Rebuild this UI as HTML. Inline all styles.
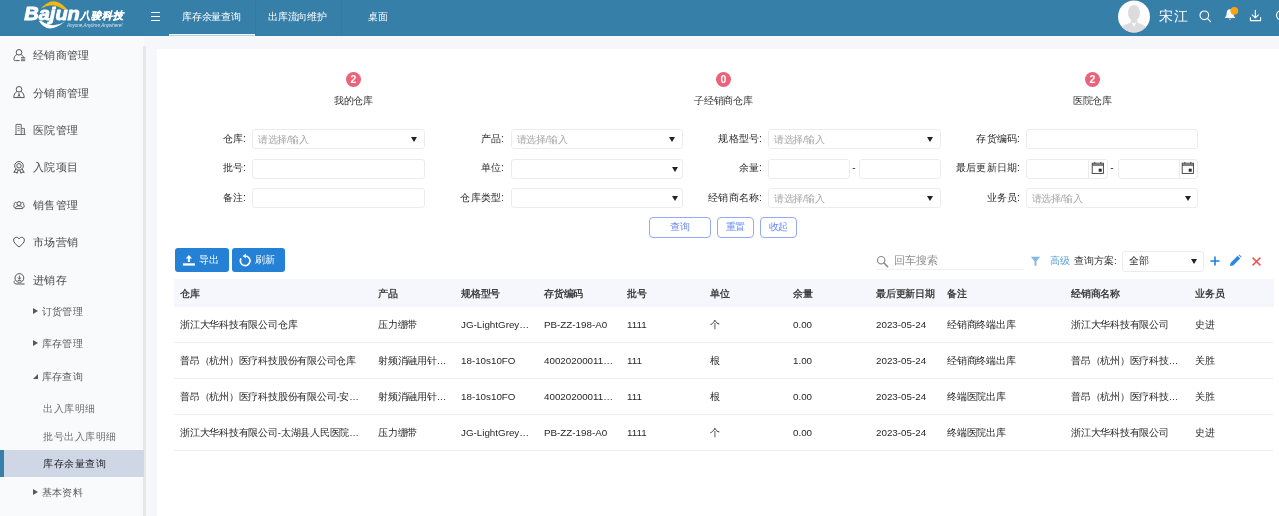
<!DOCTYPE html>
<html lang="zh">
<head>
<meta charset="utf-8">
<title>库存余量查询</title>
<style>
*{box-sizing:border-box;margin:0;padding:0}
html,body{width:1279px;height:516px;overflow:hidden;background:#f5f7fb;font-family:"Liberation Sans",sans-serif;color:#333}
#app{position:absolute;left:0;top:0;width:1279px;height:516px;overflow:hidden;will-change:transform}
.abs{position:absolute}
#hdr{position:absolute;left:0;top:0;width:1279px;height:36px;background:#367fa9}
#side{position:absolute;left:0;top:36px;width:144px;height:480px;background:#f9fafc}
#sbar{position:absolute;left:143px;top:46px;width:3px;height:470px;background:#e7e7e9;border-radius:2px 2px 0 0}
#panel{position:absolute;left:157px;top:49px;width:1122px;height:467px;background:#fff}
.tab{position:absolute;top:0;height:36px;line-height:33px;color:#fff;font-size:10px;letter-spacing:-0.2px;white-space:nowrap}
.m1{position:absolute;left:33px;font-size:11.3px;letter-spacing:0.33px;color:#4a4a4a;line-height:16px;white-space:nowrap}
.m2{position:absolute;left:42px;font-size:10.3px;letter-spacing:0.2px;color:#5a5a5a;line-height:14px;white-space:nowrap}
.m3{position:absolute;left:43px;font-size:10.3px;letter-spacing:0.5px;color:#6e6e6e;line-height:14px;white-space:nowrap}
.tri{position:absolute;left:33px;width:0;height:0;border-left:5px solid #585858;border-top:3.5px solid transparent;border-bottom:3.5px solid transparent}
.lbl{position:absolute;font-size:10.2px;letter-spacing:0.15px;color:#2b2b2b;line-height:20px;text-align:right;white-space:nowrap}
.inp{position:absolute;height:20px;border:1px solid #ececec;border-radius:3px;background:#fff;font-size:9.6px;letter-spacing:-0.3px;color:#a6a6a6;line-height:20px;padding-left:5px;white-space:nowrap}
.arr{position:absolute;width:0;height:0;border-top:5px solid #222;border-left:3.5px solid transparent;border-right:3.5px solid transparent}
.obtn{position:absolute;top:217.3px;height:20.3px;border:1px solid #93aaf8;border-radius:4px;color:#6a8cf5;font-size:9.8px;letter-spacing:-0.2px;line-height:18px;text-align:center;background:#fff}
.bbtn{position:absolute;top:248px;height:23.5px;background:#2481d6;border-radius:3px;color:#fff;font-size:10.4px;letter-spacing:0.3px;line-height:23px;white-space:nowrap}
.th{position:absolute;top:278.7px;height:28.8px;line-height:29.6px;font-size:9.8px;letter-spacing:-0.2px;font-weight:bold;color:#404040;white-space:nowrap}
.td{position:absolute;font-size:9.65px;letter-spacing:-0.22px;color:#262626;line-height:16px;white-space:nowrap;overflow:hidden;text-overflow:ellipsis}
.tl{letter-spacing:0;font-size:9.8px}
.rl{position:absolute;left:173.5px;width:1099.5px;height:1px;background:#eeeeee}
.badge{position:absolute;top:72px;width:15px;height:15px;border-radius:50%;background:#e9637a;color:#fff;font-size:10.5px;font-weight:bold;line-height:15px;text-align:center}
.blab{position:absolute;top:93.6px;font-size:9.8px;letter-spacing:-0.2px;color:#333;line-height:14px;white-space:nowrap;text-align:center;width:100px}
</style>
</head>
<body>
<div id="app">
<div id="hdr">
  <!-- logo -->
  <svg class="abs" style="left:18px;top:0" width="112" height="34" viewBox="0 0 112 34">
    <path d="M22.8 8.8 Q35.5 -6.6 49 9.2 L45 9.2 Q33.5 1.6 22.8 8.8Z" fill="#f6b60d"/>
    <path d="M20.8 20.8 Q29.5 35.5 46.6 21.8 Q35 29.2 23 20.8Z" fill="#fff"/>
    <text x="6.3" y="19.6" font-family="Liberation Sans, sans-serif" font-weight="bold" font-style="italic" font-size="18" fill="#fff" stroke="#fff" stroke-width="0.9" stroke-linejoin="round" textLength="55.5" lengthAdjust="spacingAndGlyphs">Bajun</text>
    <text x="62.3" y="19" font-family="Liberation Sans, sans-serif" font-weight="bold" font-style="italic" font-size="10.2" fill="#fff" stroke="#fff" stroke-width="0.25" textLength="42.9" lengthAdjust="spacing">八骏科技</text>
    <text x="49" y="27.4" font-family="Liberation Sans, sans-serif" font-style="italic" font-size="4.7" fill="#d4e4ef" textLength="55.5" lengthAdjust="spacingAndGlyphs">Anyone,Anytime,Anywhere!</text>
  </svg>
  <!-- hamburger -->
  <div class="abs" style="left:150.5px;top:12.1px;width:9.5px;height:1.1px;background:#fff"></div>
  <div class="abs" style="left:150.5px;top:15.9px;width:9.5px;height:1.1px;background:#fff"></div>
  <div class="abs" style="left:150.5px;top:19.7px;width:9.5px;height:1.1px;background:#fff"></div>
  <div class="tab" style="left:182px">库存余量查询</div>
  <div class="abs" style="left:169px;top:34px;width:86px;height:1px;background:#f3f7fa"></div><div class="abs" style="left:169px;top:35px;width:86px;height:1px;background:#b9d1e1"></div>
  <div class="abs" style="left:255px;top:0;width:1px;height:34px;background:rgba(0,40,80,0.045)"></div><div class="abs" style="left:341px;top:0;width:1px;height:36px;background:rgba(0,40,80,0.045)"></div>
  <div class="tab" style="left:268px">出库流向维护</div>
  <div class="tab" style="left:368px">桌面</div>
  <!-- avatar -->
  <svg class="abs" style="left:1117px;top:0" width="34" height="33" viewBox="0 0 34 33">
    <defs><clipPath id="avc"><circle cx="17" cy="16.5" r="16"/></clipPath></defs>
    <circle cx="17" cy="16.5" r="16" fill="#fdfdfd"/>
    <g clip-path="url(#avc)" fill="#dcdcdc">
      <ellipse cx="17" cy="12.8" rx="6" ry="7.8"/>
      <path d="M14 18 L20 18 L20.4 22.6 C23 23.8 28 25.3 29.5 27.5 L31 34 L3 34 L4.5 27.5 C6 25.3 11 23.8 13.6 22.6Z"/>
    </g>
    <path d="M14.6 22.2 L17 27.2 L19.4 22.2 L17 23.4Z" fill="#fdfdfd" clip-path="url(#avc)"/>
  </svg>
  <div class="abs" style="left:1159.4px;top:7px;font-size:14.2px;letter-spacing:0.3px;line-height:19px;color:#fff;white-space:nowrap">宋江</div>
  <!-- search -->
  <svg class="abs" style="left:1198px;top:9px" width="14" height="14" viewBox="0 0 14 14" fill="none" stroke="#fff" stroke-width="1.1"><circle cx="6.3" cy="6.3" r="4.3"/><path d="M9.5 9.5 L12.6 12.6" stroke-linecap="round"/></svg>
  <!-- bell -->
  <svg class="abs" style="left:1222px;top:6px" width="18" height="16" viewBox="0 0 18 16"><path d="M8 3.2 C5.6 3.2 4.6 5.2 4.6 7.2 C4.6 9.6 3.8 10.6 2.9 11.4 L2.9 12 L13.1 12 L13.1 11.4 C12.2 10.6 11.4 9.6 11.4 7.2 C11.4 5.2 10.4 3.2 8 3.2Z M6.7 12.7 A1.4 1.4 0 0 0 9.3 12.7Z" fill="#fff"/><circle cx="12.3" cy="4.8" r="3.9" fill="#fba30d"/></svg>
  <!-- download -->
  <svg class="abs" style="left:1248px;top:9px" width="14" height="14" viewBox="0 0 14 14" fill="none" stroke="#fff" stroke-width="1.1" stroke-linecap="round" stroke-linejoin="round"><path d="M7.3 1.2 L7.3 8.6 M4.2 5.8 L7.3 8.9 L10.4 5.8 M2.4 8.6 L2.4 11.6 L12.6 11.6 L12.6 8.6"/></svg>
  <svg class="abs" style="left:1272px;top:9px" width="7" height="14" viewBox="0 0 7 14" fill="none" stroke="#fff" stroke-width="1.1"><circle cx="9.2" cy="6.2" r="4.7"/></svg>
</div>

<div id="side">
</div>
<div id="sbar"></div>

<!-- sidebar icons + labels (absolute to body) -->
<svg class="abs" style="left:12px;top:48px" width="14" height="14" viewBox="0 0 14 14" fill="none" stroke="#555" stroke-width="1"><circle cx="7" cy="4.3" r="2.8"/><path d="M9.2 6.6 C11 7.6 11.6 9.3 11.6 10"/><path d="M4.8 6.6 C2.6 7.6 2 9.6 2 11.4 C2 12.4 2.6 12.6 3.4 12.6 L7.6 12.6"/><path d="M9 9.7 h4.2 M9 11.2 h4.2 M9 12.7 h4.2" stroke-width="0.9"/></svg>
<div class="m1" style="top:47px">经销商管理</div>
<svg class="abs" style="left:12px;top:85px" width="14" height="14" viewBox="0 0 14 14" fill="none" stroke="#555" stroke-width="1"><circle cx="7" cy="4.3" r="2.8"/><path d="M4.9 6.6 C2.8 7.6 1.8 10 1.8 12.6 L12.2 12.6 C12.2 10 11.2 7.6 9.1 6.6"/><path d="M7 8 L7 10 M5.8 11.8 L7 9.6 L8.2 11.8" stroke-width="0.9"/></svg>
<div class="m1" style="top:84.5px">分销商管理</div>
<svg class="abs" style="left:13px;top:121.5px" width="14" height="14" viewBox="0 0 14 14" fill="none" stroke="#6a6a6a" stroke-width="1"><path d="M3 12.4 L3 2.4 L8.2 2.4 L8.2 12.4 M8.2 6.4 L11.4 6.4 L11.4 12.4 M1.8 12.5 L12.6 12.5"/><path d="M4.6 4.6 h2 M4.6 6.6 h2 M4.6 8.6 h2 M9.4 8.4 h0.8 M9.4 10.2 h0.8" stroke-width="0.9"/></svg>
<div class="m1" style="top:122px">医院管理</div>
<svg class="abs" style="left:12px;top:160px" width="14" height="14" viewBox="0 0 14 14" fill="none" stroke="#555" stroke-width="1"><circle cx="7" cy="5.8" r="4.3"/><circle cx="7" cy="5.8" r="2.2"/><path d="M3.8 9 L1.8 12.4 L4 12 L5 13.4 L6.2 10.2 M10.2 9 L12.2 12.4 L10 12 L9 13.4 L7.8 10.2" stroke-linejoin="round"/></svg>
<div class="m1" style="top:159px">入院项目</div>
<svg class="abs" style="left:12px;top:198px" width="14" height="14" viewBox="0 0 14 14" fill="none" stroke="#555" stroke-width="1"><circle cx="7" cy="5.6" r="2"/><path d="M3.4 10.6 C3.4 8.6 5 7.8 7 7.8 C9 7.8 10.6 8.6 10.6 10.6Z" stroke-linejoin="round"/><path d="M4.6 4.4 C3 4 2 5 2.4 6.4 C1.6 7.2 1.6 9.4 3 10.2 M9.4 4.4 C11 4 12 5 11.6 6.4 C12.4 7.2 12.4 9.4 11 10.2"/></svg>
<div class="m1" style="top:197px">销售管理</div>
<svg class="abs" style="left:12px;top:235px" width="14" height="14" viewBox="0 0 14 14" fill="none" stroke="#555" stroke-width="1" stroke-linejoin="round"><path d="M7 12 C4.4 9.8 1.6 7.8 1.6 5.2 C1.6 3.4 2.9 2.3 4.3 2.3 C5.5 2.3 6.5 3 7 4 C7.5 3 8.5 2.3 9.7 2.3 C11.1 2.3 12.4 3.4 12.4 5.2 C12.4 7.8 9.6 9.8 7 12Z"/></svg>
<div class="m1" style="top:233.7px">市场营销</div>
<svg class="abs" style="left:12px;top:272px" width="14" height="14" viewBox="0 0 14 14" fill="none" stroke="#555" stroke-width="1"><circle cx="7.4" cy="6" r="4.4"/><path d="M7.4 3.6 L7.4 7 M5.8 5.6 L7.4 7.2 L9 5.6 M5.6 8.4 h3.6" stroke-width="0.9"/><path d="M2.8 8.6 C1.6 9.8 1.8 11.6 4 12 L12.6 12" /></svg>
<div class="m1" style="top:272px">进销存</div>

<div class="tri" style="top:307.5px"></div><div class="m2" style="top:304.6px">订货管理</div>
<div class="tri" style="top:339.5px"></div><div class="m2" style="top:337px">库存管理</div>
<div class="abs" style="left:33px;top:373.5px;width:0;height:0;border-bottom:5.5px solid #585858;border-left:5.5px solid transparent"></div><div class="m2" style="top:369.5px">库存查询</div>
<div class="m3" style="top:401.5px">出入库明细</div>
<div class="m3" style="top:429.5px">批号出入库明细</div>
<div class="abs" style="left:0;top:449.5px;width:144px;height:27.5px;background:#cfd6e6"></div>
<div class="abs" style="left:0;top:449.5px;width:3.5px;height:27.5px;background:#367fa9"></div>
<div class="m3" style="top:457px;color:#222">库存余量查询</div>
<div class="tri" style="top:488.5px"></div><div class="m2" style="top:485.5px">基本资料</div>

<div id="panel"></div>

<!-- badges -->
<div class="badge" style="left:346px">2</div><div class="blab" style="left:303.5px">我的仓库</div>
<div class="badge" style="left:716px">0</div><div class="blab" style="left:673.5px">子经销商仓库</div>
<div class="badge" style="left:1085px">2</div><div class="blab" style="left:1042.5px">医院仓库</div>

<!-- form row 1 -->
<div class="lbl" style="left:146px;width:100px;top:129px">仓库:</div>
<div class="inp" style="left:252px;width:173px;top:129.3px">请选择/输入</div><div class="arr" style="left:411.2px;top:136.8px"></div>
<div class="lbl" style="left:404px;width:100px;top:129px">产品:</div>
<div class="inp" style="left:510.5px;width:172px;top:129.3px">请选择/输入</div><div class="arr" style="left:668.7px;top:136.8px"></div>
<div class="lbl" style="left:662px;width:100px;top:129px">规格型号:</div>
<div class="inp" style="left:768px;width:172.5px;top:129.3px">请选择/输入</div><div class="arr" style="left:926.6px;top:136.8px"></div>
<div class="lbl" style="left:920px;width:100px;top:129px">存货编码:</div>
<div class="inp" style="left:1025.5px;width:172px;top:129.3px"></div>
<!-- row 2 -->
<div class="lbl" style="left:146px;width:100px;top:158.3px">批号:</div>
<div class="inp" style="left:252px;width:173px;top:158.6px"></div>
<div class="lbl" style="left:404px;width:100px;top:158.3px">单位:</div>
<div class="inp" style="left:510.5px;width:172px;top:158.6px"></div><div class="arr" style="left:671.5px;top:166.8px"></div>
<div class="lbl" style="left:662px;width:100px;top:158.3px">余量:</div>
<div class="inp" style="left:768px;width:82px;top:158.6px"></div>
<div class="abs" style="left:852.3px;top:158.3px;font-size:10px;line-height:20px;color:#333">-</div>
<div class="inp" style="left:859px;width:81.5px;top:158.6px"></div>
<div class="lbl" style="left:920px;width:100px;top:158.3px">最后更新日期:</div>
<div class="inp" style="left:1025.5px;width:82px;top:158.6px"></div>
<div class="abs" style="left:1088px;top:159.6px;width:1px;height:18px;background:#ececec"></div>
<svg class="abs" style="left:1091px;top:161px" width="14" height="14" viewBox="0 0 14 14" fill="none" stroke="#3a3a3a" stroke-width="0.9"><rect x="1.2" y="2.2" width="11.2" height="10.2"/><path d="M1.2 4 h11.2" stroke-width="1.3"/><path d="M3.8 1 v1.6 M9.8 1 v1.6" stroke-width="1"/><rect x="7.7" y="7.7" width="3" height="3" fill="#2a2a2a" stroke="none"/></svg>
<div class="abs" style="left:1110.3px;top:158.3px;font-size:10px;line-height:20px;color:#333">-</div>
<div class="inp" style="left:1117.5px;width:80px;top:158.6px"></div>
<div class="abs" style="left:1178.5px;top:159.6px;width:1px;height:18px;background:#ececec"></div>
<svg class="abs" style="left:1181.2px;top:161px" width="14" height="14" viewBox="0 0 14 14" fill="none" stroke="#3a3a3a" stroke-width="0.9"><rect x="1.2" y="2.2" width="11.2" height="10.2"/><path d="M1.2 4 h11.2" stroke-width="1.3"/><path d="M3.8 1 v1.6 M9.8 1 v1.6" stroke-width="1"/><rect x="7.7" y="7.7" width="3" height="3" fill="#2a2a2a" stroke="none"/></svg>
<!-- row 3 -->
<div class="lbl" style="left:146px;width:100px;top:187.7px">备注:</div>
<div class="inp" style="left:252px;width:173px;top:188px"></div>
<div class="lbl" style="left:404px;width:100px;top:187.7px">仓库类型:</div>
<div class="inp" style="left:510.5px;width:172px;top:188px"></div><div class="arr" style="left:671.5px;top:196px"></div>
<div class="lbl" style="left:662px;width:100px;top:187.7px">经销商名称:</div>
<div class="inp" style="left:768px;width:172.5px;top:188px">请选择/输入</div><div class="arr" style="left:926.6px;top:195.5px"></div>
<div class="lbl" style="left:920px;width:100px;top:187.7px">业务员:</div>
<div class="inp" style="left:1025.5px;width:172px;top:188px">请选择/输入</div><div class="arr" style="left:1184.5px;top:195.5px"></div>

<!-- buttons -->
<div class="obtn" style="left:649px;width:61.5px">查询</div>
<div class="obtn" style="left:717px;width:37px">重置</div>
<div class="obtn" style="left:760px;width:37px">收起</div>

<div class="bbtn" style="left:175px;width:54px"><svg class="abs" style="left:7px;top:6px" width="14" height="12" viewBox="0 0 14 12" fill="#fff"><path d="M6.9 0.9 L10.1 4.5 L7.9 4.5 L7.9 8 L5.9 8 L5.9 4.5 L3.7 4.5Z"/><rect x="0.9" y="9.3" width="12" height="2.3"/></svg><span class="abs" style="left:23.5px;top:0">导出</span></div>
<div class="bbtn" style="left:232px;width:53px"><svg class="abs" style="left:7px;top:4.6px" width="14" height="14" viewBox="0 0 14 14" fill="none" stroke="#fff" stroke-width="1.7"><path d="M2.04 5.4 A4.8 4.8 0 1 0 6.2 3"/><path d="M6.9 0.8 L3.5 3 L6.9 5.2Z" stroke="none" fill="#fff"/></svg><span class="abs" style="left:23px;top:0">刷新</span></div>

<!-- right toolbar -->
<svg class="abs" style="left:875.5px;top:254.5px" width="13" height="13" viewBox="0 0 13 13" fill="none" stroke="#8c8c8c" stroke-width="1.2"><circle cx="5.2" cy="5.2" r="3.7"/><path d="M8 8 L11.6 11.6" stroke-linecap="round" stroke-width="1.6"/></svg>
<div class="abs" style="left:893.5px;top:252px;font-size:11.1px;line-height:16px;color:#8e8e8e;white-space:nowrap">回车搜索</div>
<div class="abs" style="left:875.5px;top:268.5px;width:148px;height:1px;background:#f1f1f1"></div>
<svg class="abs" style="left:1030px;top:255.5px" width="11" height="11" viewBox="0 0 11 11" fill="#84b9e7"><path d="M0.8 0.8 L10.2 0.8 L6.5 5.2 L6.5 10.2 L4.5 9.2 L4.5 5.2Z"/></svg>
<div class="abs" style="left:1049.5px;top:253px;font-size:9.8px;line-height:16px;color:#5a9ed8;white-space:nowrap">高级</div>
<div class="abs" style="left:1074px;top:253px;font-size:9.8px;line-height:16px;color:#333;white-space:nowrap">查询方案:</div>
<div class="inp" style="left:1121.8px;top:251.4px;height:20.4px;width:82px;color:#333;padding-left:6.5px;line-height:18.4px">全部</div><div class="arr" style="left:1190.5px;top:259px"></div>
<svg class="abs" style="left:1209px;top:255px" width="12" height="12" viewBox="0 0 12 12" stroke="#1e7fe0" stroke-width="1.6" fill="none"><path d="M6 1.4 V10.6 M1.4 6 H10.6"/></svg>
<svg class="abs" style="left:1229px;top:254px" width="13" height="13" viewBox="0 0 13 13" fill="#2f86e6"><path d="M1 12 L1.6 8.8 L8.6 1.8 L11.2 4.4 L4.2 11.4Z"/><path d="M9.4 1 L10.2 0.4 L12.6 2.8 L12 3.6Z"/></svg>
<svg class="abs" style="left:1250.5px;top:255.5px" width="11" height="11" viewBox="0 0 11 11" stroke="#f0565a" stroke-width="1.5" fill="none"><path d="M1.6 1.6 L9.4 9.4 M9.4 1.6 L1.6 9.4"/></svg>

<!-- table -->
<div class="abs" style="left:173.5px;top:278.7px;width:1100px;height:28.8px;background:#f5f7fc"></div>
<div class="th" style="left:180px">仓库</div>
<div class="th" style="left:378px">产品</div>
<div class="th" style="left:461px">规格型号</div>
<div class="th" style="left:544px">存货编码</div>
<div class="th" style="left:627px">批号</div>
<div class="th" style="left:710px">单位</div>
<div class="th" style="left:793px">余量</div>
<div class="th" style="left:876px">最后更新日期</div>
<div class="th" style="left:947px">备注</div>
<div class="th" style="left:1071px">经销商名称</div>
<div class="th" style="left:1195px">业务员</div>

<div class="rl" style="top:342px"></div>
<div class="rl" style="top:378px"></div>
<div class="rl" style="top:414px"></div>
<div class="rl" style="top:449.5px"></div>

<!-- row1 -->
<div class="td" style="left:180px;top:317.4px;width:186px">浙江大华科技有限公司仓库</div>
<div class="td" style="left:378px;top:317.4px;width:70px">压力绷带</div>
<div class="td tl" style="left:461px;top:317.4px;width:70px">JG-LightGrey-01</div>
<div class="td tl" style="left:544px;top:317.4px;width:69.3px">PB-ZZ-198-A0</div>
<div class="td tl" style="left:627px;top:317.4px;width:70px">1111</div>
<div class="td" style="left:710px;top:317.4px;width:70px">个</div>
<div class="td tl" style="left:793px;top:317.4px;width:70px">0.00</div>
<div class="td tl" style="left:876px;top:317.4px;width:66px">2023-05-24</div>
<div class="td" style="left:947px;top:317.4px;width:111px">经销商终端出库</div>
<div class="td" style="left:1071px;top:317.4px;width:111px">浙江大华科技有限公司</div>
<div class="td" style="left:1195px;top:317.4px;width:70px">史进</div>
<!-- row2 -->
<div class="td" style="left:180px;top:352.7px;width:186px">普昂（杭州）医疗科技股份有限公司仓库</div>
<div class="td" style="left:378px;top:352.7px;width:70px">射频消融用针状电极</div>
<div class="td tl" style="left:461px;top:352.7px;width:70px">18-10s10FO</div>
<div class="td tl" style="left:544px;top:352.7px;width:69.6px;font-size:9.8px">4002020001101</div>
<div class="td tl" style="left:627px;top:352.7px;width:70px">111</div>
<div class="td" style="left:710px;top:352.7px;width:70px">根</div>
<div class="td tl" style="left:793px;top:352.7px;width:70px">1.00</div>
<div class="td tl" style="left:876px;top:352.7px;width:66px">2023-05-24</div>
<div class="td" style="left:947px;top:352.7px;width:111px">经销商终端出库</div>
<div class="td" style="left:1071px;top:352.7px;width:111px">普昂（杭州）医疗科技股份有限公司</div>
<div class="td" style="left:1195px;top:352.7px;width:70px">关胜</div>
<!-- row3 -->
<div class="td" style="left:180px;top:388.5px;width:186px">普昂（杭州）医疗科技股份有限公司-安徽省立医院</div>
<div class="td" style="left:378px;top:388.5px;width:70px">射频消融用针状电极</div>
<div class="td tl" style="left:461px;top:388.5px;width:70px">18-10s10FO</div>
<div class="td tl" style="left:544px;top:388.5px;width:69.6px;font-size:9.8px">4002020001101</div>
<div class="td tl" style="left:627px;top:388.5px;width:70px">111</div>
<div class="td" style="left:710px;top:388.5px;width:70px">根</div>
<div class="td tl" style="left:793px;top:388.5px;width:70px">0.00</div>
<div class="td tl" style="left:876px;top:388.5px;width:66px">2023-05-24</div>
<div class="td" style="left:947px;top:388.5px;width:111px">终端医院出库</div>
<div class="td" style="left:1071px;top:388.5px;width:111px">普昂（杭州）医疗科技股份有限公司</div>
<div class="td" style="left:1195px;top:388.5px;width:70px">关胜</div>
<!-- row4 -->
<div class="td" style="left:180px;top:424.7px;width:186px">浙江大华科技有限公司-太湖县人民医院仓库</div>
<div class="td" style="left:378px;top:424.7px;width:70px">压力绷带</div>
<div class="td tl" style="left:461px;top:424.7px;width:70px">JG-LightGrey-01</div>
<div class="td tl" style="left:544px;top:424.7px;width:69.3px">PB-ZZ-198-A0</div>
<div class="td tl" style="left:627px;top:424.7px;width:70px">1111</div>
<div class="td" style="left:710px;top:424.7px;width:70px">个</div>
<div class="td tl" style="left:793px;top:424.7px;width:70px">0.00</div>
<div class="td tl" style="left:876px;top:424.7px;width:66px">2023-05-24</div>
<div class="td" style="left:947px;top:424.7px;width:111px">终端医院出库</div>
<div class="td" style="left:1071px;top:424.7px;width:111px">浙江大华科技有限公司</div>
<div class="td" style="left:1195px;top:424.7px;width:70px">史进</div>
</div>
</body>
</html>
